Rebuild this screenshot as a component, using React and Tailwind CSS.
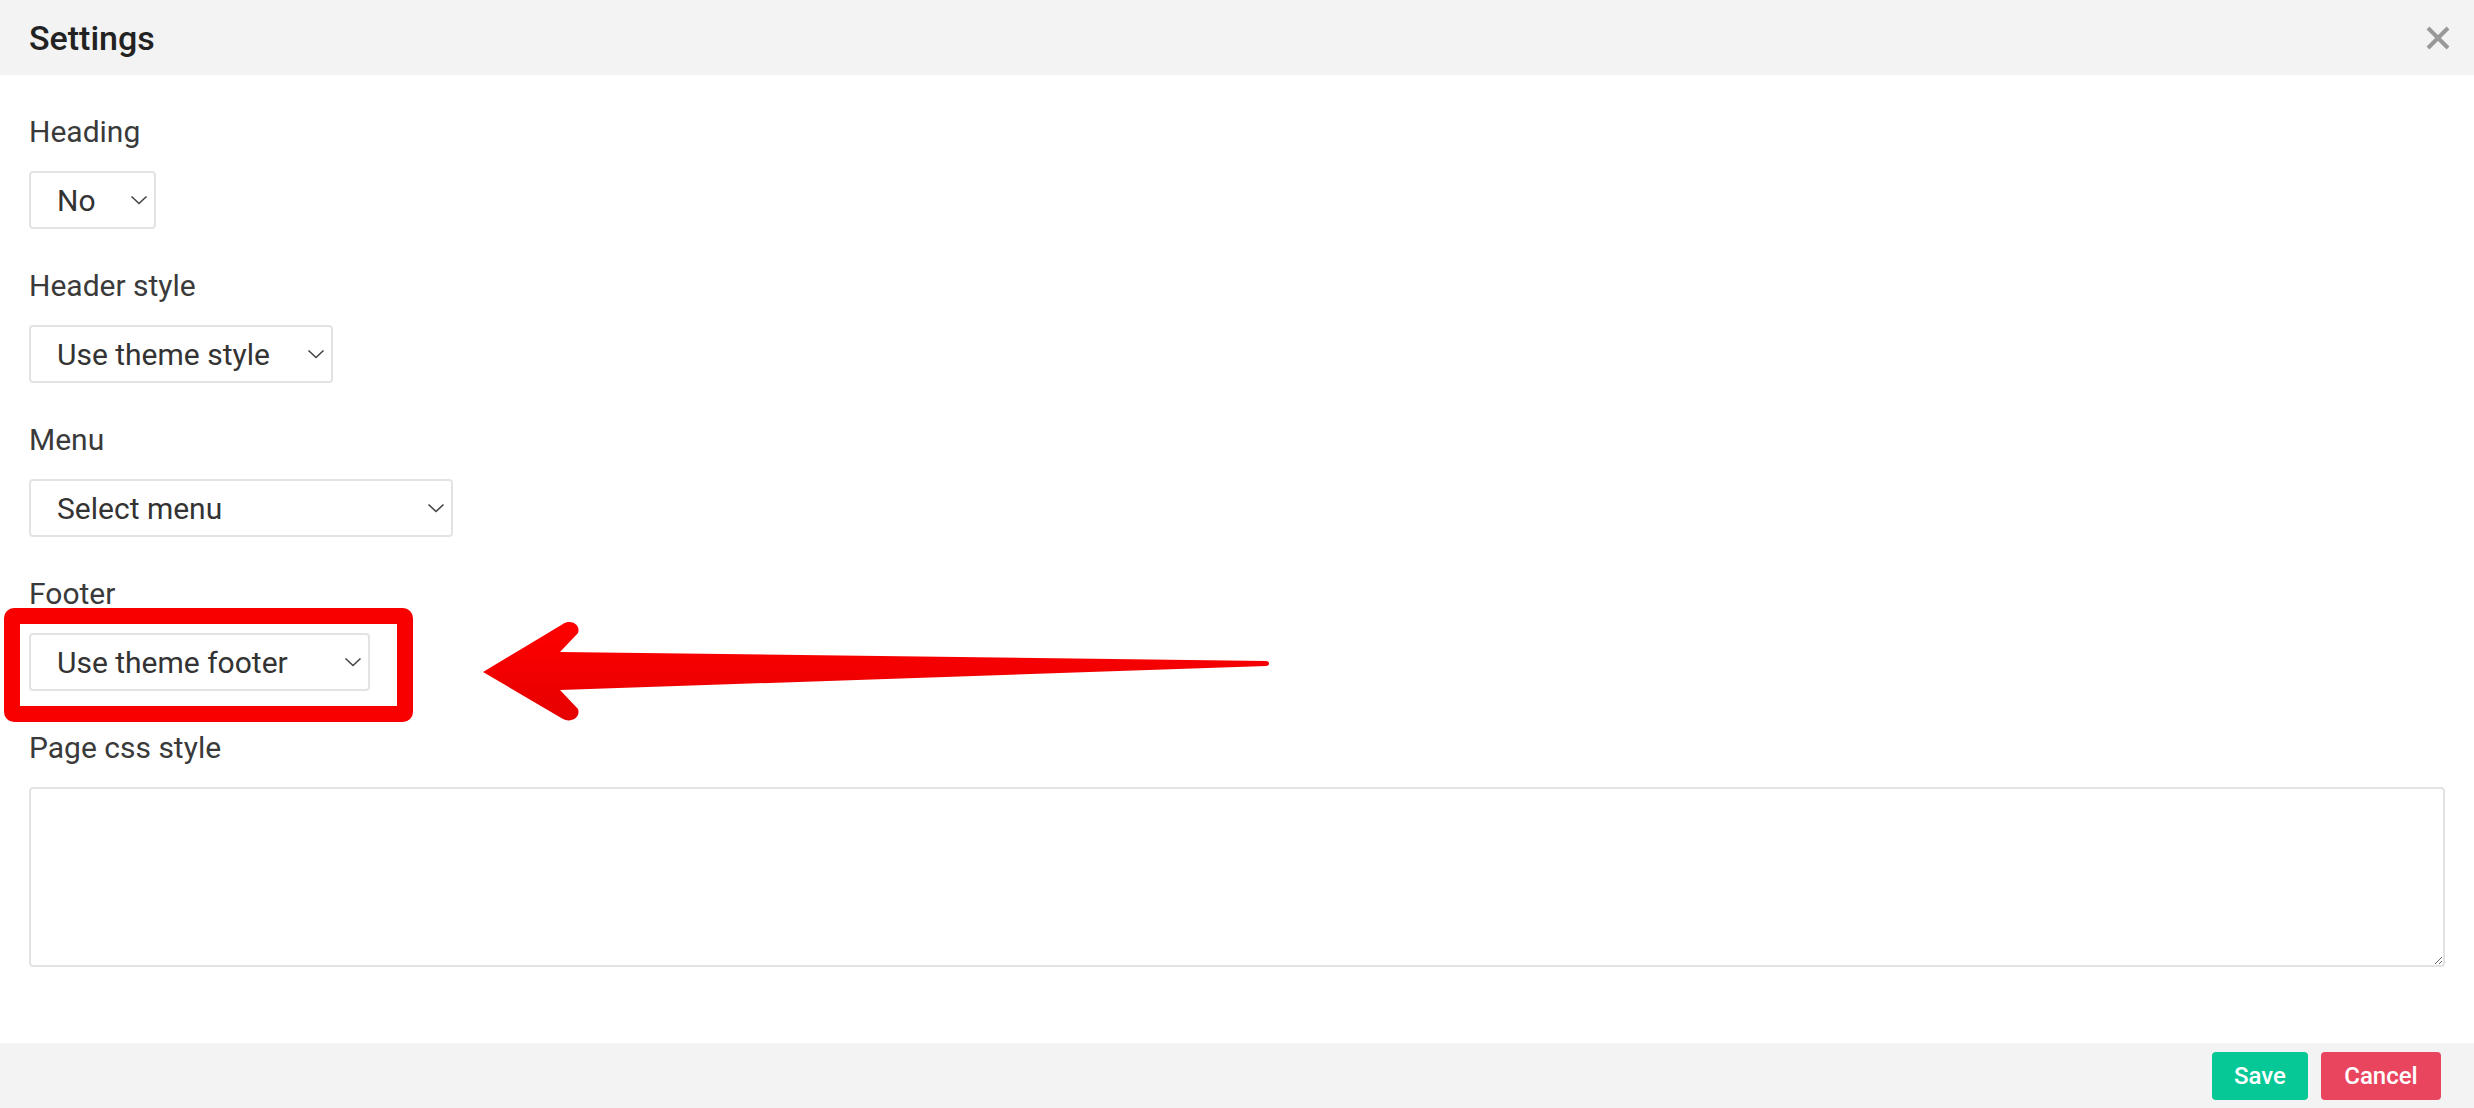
import React from 'react';

const font = { fontFamily: 'Roboto, "Liberation Sans", sans-serif' };

function Chevron() {
  return (
    <svg width="18" height="10" viewBox="0 0 18 10" className="pointer-events-none absolute right-[8px] top-1/2 -translate-y-1/2">
      <path d="M1.5 1.5 L9 8.5 L16.5 1.5" fill="none" stroke="#444" strokeWidth="1.6" />
    </svg>
  );
}

function SelectField({ label, value, options, width }) {
  return (
    <div className="mb-[34px]">
      <label className="block text-[30px] leading-[45px] text-[#3a3a3a] mb-[17px]">{label}</label>
      <div className={`relative ${width}`}>
        <select
          defaultValue={value}
          className="block w-full h-[58px] appearance-none bg-white border-2 border-[#e3e3e3] rounded-[4px] pl-[26px] pr-[40px] text-[30px] text-[#333] outline-none"
          style={font}
        >
          {options.map((o) => (
            <option key={o}>{o}</option>
          ))}
        </select>
        <Chevron />
      </div>
    </div>
  );
}

export default function App() {
  return (
    <div className="relative h-screen w-full flex flex-col bg-white overflow-hidden" style={font}>
      <div className="h-[75px] shrink-0 bg-[#f3f3f3] flex items-center justify-between pl-[29px] pr-[24px]">
        <h2 className="text-[34px] font-medium text-[#222] leading-none">Settings</h2>
        <button className="w-[24px] h-[24px] flex items-center justify-center">
          <svg width="24" height="24" viewBox="0 0 24 24">
            <path d="M2 2 L22 22 M22 2 L2 22" stroke="#999" strokeWidth="4" />
          </svg>
        </button>
      </div>

      <div className="flex-1 px-[29px] pt-[34px]">
        <SelectField label="Heading" value="No" options={['No', 'Yes']} width="w-[127px]" />
        <SelectField
          label="Header style"
          value="Use theme style"
          options={['Use theme style', 'Default', 'Transparent']}
          width="w-[304px]"
        />
        <SelectField label="Menu" value="Select menu" options={['Select menu', 'Main menu']} width="w-[424px]" />
        <SelectField
          label="Footer"
          value="Use theme footer"
          options={['Use theme footer', 'No footer']}
          width="w-[341px]"
        />
        <div>
          <label className="block text-[30px] leading-[45px] text-[#3a3a3a] mb-[17px]">Page css style</label>
          <textarea
            className="block w-full h-[180px] border-2 border-[#e3e3e3] rounded-[4px] p-3 text-[26px] text-[#333] outline-none"
            style={font}
          />
        </div>
      </div>

      <div className="h-[65px] shrink-0 bg-[#f3f3f3] flex items-center justify-end gap-[13px] pr-[33px]">
        <button className="w-[96px] h-[48px] rounded-[4px] bg-[#05c896] text-white text-[24px] font-medium">Save</button>
        <button className="w-[120px] h-[48px] rounded-[4px] bg-[#e9455f] text-white text-[24px] font-medium">Cancel</button>
      </div>

      {/* annotation: highlight box */}
      <div className="absolute left-[4px] top-[608px] w-[409px] h-[114px] border-[16px] border-[#f80000] rounded-[10px] pointer-events-none" />

      {/* annotation: arrow */}
      <svg className="absolute left-0 top-0 pointer-events-none" width="1300" height="740" viewBox="0 0 1300 740">
        <defs>
          <linearGradient id="arrowRed" x1="0" y1="0" x2="0" y2="1">
            <stop offset="0" stopColor="#ff0000" />
            <stop offset="1" stopColor="#e60000" />
          </linearGradient>
        </defs>
        <path
          d="M483 672 L563 624 C570 619 581 624 578 633 L560 652 L1266 661 C1270 661 1270 666 1266 666 L560 690 L578 709 C581 718 570 723 563 719 Z"
          fill="url(#arrowRed)"
        />
      </svg>
    </div>
  );
}
